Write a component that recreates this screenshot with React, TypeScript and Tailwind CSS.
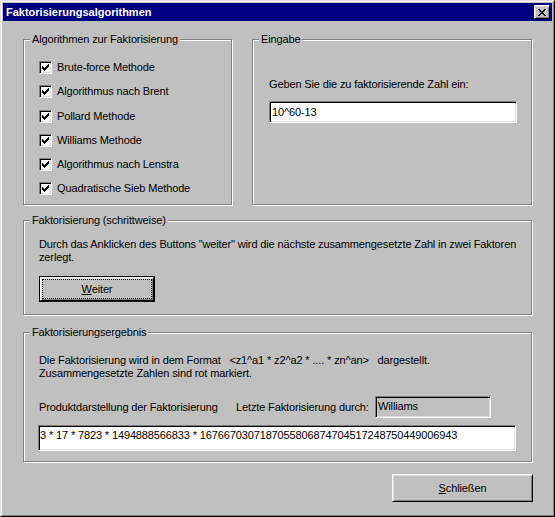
import React from "react";

const font = "font-['Liberation_Sans',Arial,sans-serif] text-[11px] leading-[13px] tracking-[-0.13px] text-black";

function Check() {
    // 7x7 Win98 check mark, pixel by pixel
    const px: [number, number][] = [
        [6, 0], [5, 1], [6, 1], [0, 2], [4, 2], [5, 2], [6, 2],
        [0, 3], [1, 3], [3, 3], [4, 3], [5, 3],
        [0, 4], [1, 4], [2, 4], [3, 4], [4, 4],
        [1, 5], [2, 5], [3, 5], [2, 6],
    ];
    return (
        <svg width="7" height="7" viewBox="0 0 7 7" shapeRendering="crispEdges">
            {px.map(([x, y]) => <rect key={`${x}-${y}`} x={x} y={y} width="1" height="1" fill="#000" />)}
        </svg>
    );
}

function CloseGlyph() {
    const rows = ["XX....XX", ".XX..XX.", "..XXXX..", "...XX...", "..XXXX..", ".XX..XX.", "XX....XX"];
    return (
        <svg width="8" height="7" viewBox="0 0 8 7" shapeRendering="crispEdges">
            {rows.flatMap((r, y) => r.split("").map((c, x) => c === "X" ? <rect key={`${x}-${y}`} x={x} y={y} width="1" height="1" fill="#000" /> : null))}
        </svg>
    );
}

function Group({ title, className, children }: { title: string; className: string; children: React.ReactNode }) {
    return (
        <div className={`relative border border-[#808080] shadow-[inset_1px_1px_0_#fff,1px_1px_0_#fff] ${className}`}>
            <span className="absolute left-[6px] -top-[7px] px-[2px] bg-[#c0c0c0] whitespace-nowrap">{title}</span>
            {children}
        </div>
    );
}

function CheckRow({ label }: { label: string }) {
    return (
        <div className="flex items-center h-[13px] gap-[5px]">
            <div className="w-[13px] h-[13px] bg-white border border-t-[#808080] border-l-[#808080] border-r-white border-b-white shadow-[inset_1px_1px_0_#000,inset_-1px_-1px_0_#dfdfdf] flex items-center justify-center">
                <Check />
            </div>
            <span className="whitespace-nowrap">{label}</span>
        </div>
    );
}

const sunken = "border border-t-[#808080] border-l-[#808080] border-r-white border-b-white shadow-[inset_1px_1px_0_#000,inset_-1px_-1px_0_#dfdfdf]";
const raised = "border border-t-white border-l-white border-r-black border-b-black shadow-[inset_1px_1px_0_#dfdfdf,inset_-1px_-1px_0_#808080]";

export default function App() {
    const algorithmen = [
        "Brute-force Methode",
        "Algorithmus nach Brent",
        "Pollard Methode",
        "Williams Methode",
        "Algorithmus nach Lenstra",
        "Quadratische Sieb Methode",
    ];

    return (
        <div className={`w-[555px] h-[517px] bg-[#c0c0c0] border border-t-[#dfdfdf] border-l-[#dfdfdf] border-r-black border-b-black ${font}`}>
            <div className="h-full border border-t-white border-l-white border-r-[#808080] border-b-[#808080] p-px flex flex-col">
                <div className="h-[18px] bg-[#000080] flex items-center justify-between pl-[3px] pr-[2px]">
                    <span className="text-white font-bold tracking-normal">Faktorisierungsalgorithmen</span>
                    <div className={`w-[16px] h-[14px] bg-[#c0c0c0] flex items-center justify-center ${raised}`}>
                        <CloseGlyph />
                    </div>
                </div>

                <div className="flex-1 pl-[20px] pt-[18px]">
                    <div className="flex gap-[20px]">
                        <Group title="Algorithmen zur Faktorisierung" className="w-[209px] h-[166px]">
                            <div className="flex flex-col gap-[11.3px] pl-[15px] pt-[21px]">
                                {algorithmen.map(a => <CheckRow key={a} label={a} />)}
                            </div>
                        </Group>

                        <Group title="Eingabe" className="w-[280px] h-[166px]">
                            <div className="pl-[16px] pt-[38px]">
                                <p className="whitespace-nowrap">Geben Sie die zu faktorisierende Zahl ein:</p>
                                <div className={`mt-[10px] w-[248px] h-[22px] bg-white flex items-center pl-[2px] ${sunken}`}>
                                    10^60-13
                                </div>
                            </div>
                        </Group>
                    </div>

                    <Group title="Faktorisierung (schrittweise)" className="mt-[15px] w-[509px] h-[95px]">
                        <div className="pl-[15px] pt-[17px]">
                            <p className="whitespace-nowrap">
                                Durch das Anklicken des Buttons "weiter" wird die nächste zusammengesetzte Zahl in zwei Faktoren<br />zerlegt.
                            </p>
                            <div className="mt-[12px] w-[116px] h-[26px] border border-black">
                                <div className={`h-full p-px ${raised}`}>
                                    <div className="h-full border border-dotted border-black flex items-center justify-center">
                                        <span><u className="underline-offset-[1px]">W</u>eiter</span>
                                    </div>
                                </div>
                            </div>
                        </div>
                    </Group>

                    <Group title="Faktorisierungsergebnis" className="mt-[17px] w-[509px] h-[130px]">
                        <div className="pl-[15px] pt-[21px]">
                            <p className="whitespace-pre">
                                {"Die Faktorisierung wird in dem Format   <z1^a1 * z2^a2 * .... * zn^an>   dargestellt."}<br />Zusammengesetzte Zahlen sind rot markiert.
                            </p>
                            <div className="mt-[16px] flex items-center">
                                <span className="w-[197px] whitespace-nowrap">Produktdarstellung der Faktorisierung</span>
                                <span className="w-[139px] whitespace-nowrap">Letzte Faktorisierung durch:</span>
                                <div className={`w-[116px] h-[22px] bg-[#c0c0c0] flex items-center pl-[2px] pb-px ${sunken}`}>
                                    Williams
                                </div>
                            </div>
                            <div className={`mt-[7px] -ml-px w-[478px] h-[26px] bg-white pl-[1px] pt-[3px] whitespace-nowrap ${sunken}`}>
                                3 * 17 * 7823 * 1494888566833 * 1676670307187055806874704517248750449006943
                            </div>
                        </div>
                    </Group>

                    <div className={`mt-[12px] ml-[369px] w-[141px] h-[28px] flex items-center justify-center ${raised}`}>
                        <span><u className="underline-offset-[1px]">S</u>chließen</span>
                    </div>
                </div>
            </div>
        </div>
    );
}
